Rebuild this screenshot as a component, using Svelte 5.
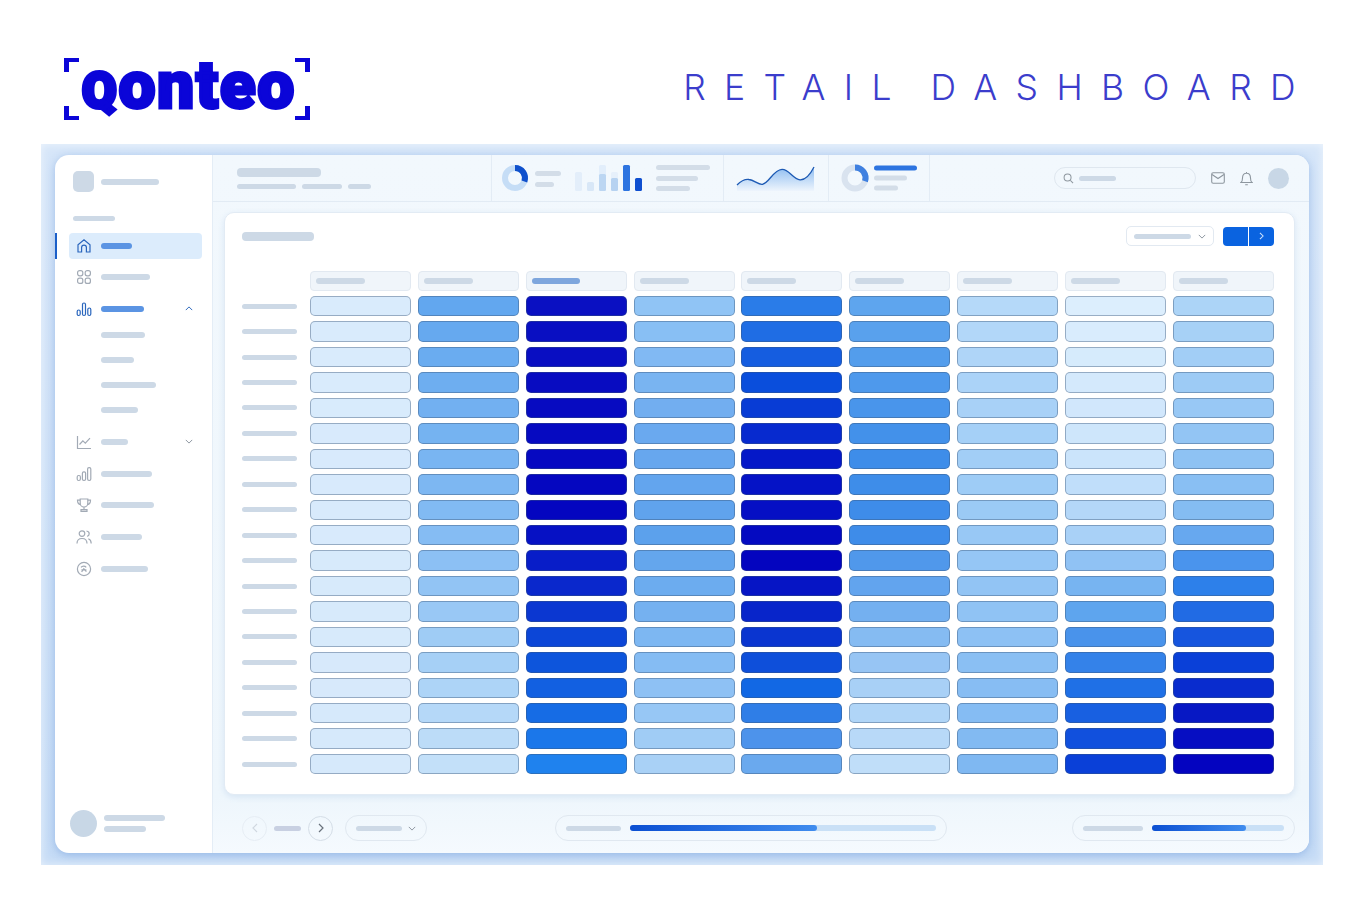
<script>
  const mix = (a, b, t) => a.map((v, i) => Math.round(v + (b[i] - v) * t));
  const hex = (h) => [1, 3, 5].map((i) => parseInt(h.slice(i, i + 2), 16));

  // colour stops per column: [row, colour]
  const columns = [
    [[0, "#d9ebfc"], [18, "#d6e9fb"]],
    [[0, "#62a7ef"], [9, "#85bcf3"], [14, "#a6d0f6"], [18, "#c3e0f9"]],
    [[0, "#0a10c2"], [8, "#0406c0"], [11, "#0a28cc"], [14, "#0d55dc"], [18, "#1f82ee"]],
    [[0, "#90c4f5"], [5, "#6aa9ef"], [9, "#5ca1ec"], [14, "#85bcf3"], [18, "#a9d1f6"]],
    [[0, "#2a7ce8"], [3, "#0a4edc"], [6, "#0518c8"], [10, "#0405bf"], [13, "#0a35d0"], [15, "#1268e4"], [18, "#6aa9ee"]],
    [[0, "#5ea5ee"], [6, "#3e8de9"], [9, "#3e8ce9"], [12, "#74b0f0"], [15, "#a8d0f6"], [18, "#c0def9"]],
    [[0, "#b5d9f9"], [9, "#98c8f5"], [18, "#7fb8f2"]],
    [[0, "#dceefd"], [6, "#cbe4fb"], [9, "#a9d1f7"], [12, "#5ea5ee"], [15, "#1f70e6"], [18, "#0a40d8"]],
    [[0, "#acd4f7"], [8, "#84bcf2"], [11, "#2d80ea"], [14, "#0a40d8"], [16, "#0718c4"], [18, "#0404c0"]]
  ];

  function cellColour(stops, row) {
    for (let i = 0; i < stops.length - 1; i++) {
      const [r0, c0] = stops[i];
      const [r1, c1] = stops[i + 1];
      if (row >= r0 && row <= r1) {
        const [r, g, b] = mix(hex(c0), hex(c1), (row - r0) / (r1 - r0));
        return `rgb(${r},${g},${b})`;
      }
    }
    return stops[0][1];
  }

  const rows = Array.from({ length: 19 }, (_, i) => i);

  const nav = [
    { icon: "home", w: 31, active: true },
    { icon: "apps", w: 49 },
    { icon: "bars", w: 43, open: true, blue: true },
    { sub: true, w: 44 },
    { sub: true, w: 33 },
    { sub: true, w: 55 },
    { sub: true, w: 37 },
    { icon: "line", w: 27, closed: true },
    { icon: "stats", w: 51 },
    { icon: "cup", w: 53 },
    { icon: "users", w: 41 },
    { icon: "badge", w: 47 }
  ];
</script>

<div class="page">
  <header class="brand">
    <div class="logo">
      <i class="corner tl"></i><i class="corner tr"></i><i class="corner bl"></i><i class="corner br"></i>
      <span class="logo-q">Q</span><span>onteo</span>
    </div>
    <h1>RETAIL DASHBOARD</h1>
  </header>

  <div class="panel">
    <div class="app">
      <aside>
        <div class="side-head">
          <div class="square"></div>
          <div class="bar" style:width="58px"></div>
        </div>
        <div class="bar section"></div>
        <nav>
          {#each nav as item}
            <div class="nav-item" class:active={item.active} class:sub={item.sub} class:open={item.open} class:closed={item.closed}>
              {#if item.icon}
                <svg class="ico" class:blue={item.active || item.blue} viewBox="0 0 16 16">
                  {#if item.icon === "home"}
                    <path d="M2 14V6.800L8 1.800l6 5V14h-3.600V9.500a2.400 2.400 0 0 0-4.800 0V14z" />
                  {:else if item.icon === "apps"}
                    <rect x="1.600" y="1.600" width="5.200" height="5.200" rx="2" /><rect x="9.200" y="1.600" width="5.200" height="5.200" rx="2" />
                    <rect x="1.600" y="9.200" width="5.200" height="5.200" rx="2" /><rect x="9.200" y="9.200" width="5.200" height="5.200" rx="2" />
                  {:else if item.icon === "bars"}
                    <rect x="1.200" y="9" width="3" height="5.500" rx="1.500" />
                    <rect x="6.500" y="2" width="3" height="12.500" rx="1.500" />
                    <rect x="11.800" y="7" width="3" height="7.500" rx="1.500" />
                  {:else if item.icon === "line"}
                    <path d="M1.500 2v12.500h13.500M3.500 10.500l3.400-3.600 2.400 2.200 4.700-5" />
                  {:else if item.icon === "stats"}
                    <rect x="1.200" y="9.500" width="3.200" height="5" rx="1.400" />
                    <rect x="6.400" y="5.800" width="3.200" height="8.700" rx="1.400" />
                    <rect x="11.600" y="1.600" width="3.200" height="12.900" rx="1.400" />
                  {:else if item.icon === "cup"}
                    <path d="M4.200 2h7.600v4.200a3.800 3.800 0 0 1-7.600 0zM4.200 3.200H1.500c0 2.600 1 4 3.100 4.500M11.800 3.200h2.700c0 2.600-1 4-3.100 4.500M8 10v2.500M5 14.300h6v-1.600H5z" />
                  {:else if item.icon === "users"}
                    <circle cx="6" cy="4.600" r="2.800" />
                    <path d="M1 14.500c0-3.400 2-5 5-5s5 1.600 5 5M10.500 2c1.800.3 2.700 1.500 2.700 2.800 0 1.200-.8 2.200-2 2.600M12.300 9.800c1.800.6 2.900 2.200 2.900 4.700" />
                  {:else}
                    <circle cx="8" cy="8" r="6.600" />
                    <path d="M5 6.300c1.200-1.600 4-1.700 5.200 0M5.600 11l2.200-3.200 2.600 2.900M5.400 8.800h5" />
                  {/if}
                </svg>
              {/if}
              <div class="bar" class:bluebar={item.active || item.blue} style:width="{item.w}px"></div>
              {#if item.open}
                <svg class="chev up" viewBox="0 0 10 6"><path d="M1 5l4-4 4 4" /></svg>
              {:else if item.closed}
                <svg class="chev" viewBox="0 0 10 6"><path d="M1 1l4 4 4-4" /></svg>
              {/if}
            </div>
          {/each}
        </nav>
        <div class="profile">
          <div class="avatar"></div>
          <div class="profile-lines">
            <div class="bar" style:width="61px"></div>
            <div class="bar" style:width="42px"></div>
          </div>
        </div>
      </aside>

      <div class="content">
        <div class="topbar">
          <div class="titles">
            <div class="bar big" style:width="84px"></div>
            <div class="sublines">
              <div class="bar thin" style:width="59px"></div>
              <div class="bar thin" style:width="40px"></div>
              <div class="bar thin" style:width="23px"></div>
            </div>
          </div>

          <svg class="widget w1" viewBox="492 155 231 46">
            <circle cx="515" cy="178" r="10" class="ring light" />
            <path d="M515 168a10 10 0 0 1 9.400 13.400" class="ring dark" />
            <rect x="535" y="171" width="26" height="5" rx="2.500" fill="#d3dde8" />
            <rect x="535" y="182" width="19" height="5" rx="2.500" fill="#d3dde8" />
            <rect x="575" y="172" width="7" height="19" rx="1.500" fill="#e3eefa" />
            <rect x="587" y="182" width="7" height="9" rx="1.500" fill="#d8e7f7" />
            <rect x="599" y="165" width="7" height="26" rx="1.500" fill="#e2eefb" />
            <rect x="599" y="174" width="7" height="17" rx="1.500" fill="#bcd6f2" />
            <rect x="611" y="172" width="7" height="19" rx="1.500" fill="#e6f0fb" />
            <rect x="611" y="178" width="7" height="13" rx="1.500" fill="#b6d2f1" />
            <rect x="623" y="165" width="7" height="26" rx="1.500" fill="#2d74e0" />
            <rect x="635" y="178" width="7" height="13" rx="1.500" fill="#0f4fd0" />
            <rect x="656" y="165" width="54" height="5" rx="2.500" fill="#d3dde8" />
            <rect x="656" y="176" width="42" height="5" rx="2.500" fill="#d3dde8" />
            <rect x="656" y="186" width="34" height="5" rx="2.500" fill="#d3dde8" />
          </svg>

          <svg class="widget w2" viewBox="724 155 104 46">
            <defs>
              <linearGradient id="spark" x1="0" y1="0" x2="0" y2="1">
                <stop offset="0" stop-color="#8fbdf0" />
                <stop offset="1" stop-color="#eef5fd" />
              </linearGradient>
            </defs>
            <path d="M737 185c4-4 8-6 12-5.500 5 .5 9 5 13 4.800 7-.5 11-14.500 20-15 7-.3 11 10 18 10.500 6 .3 11-6.800 14-12.800V191H737z" fill="url(#spark)" />
            <path d="M737 185c4-4 8-6 12-5.500 5 .5 9 5 13 4.800 7-.5 11-14.500 20-15 7-.3 11 10 18 10.500 6 .3 11-6.800 14-12.800" fill="none" stroke="#1d5ab4" stroke-width="1.300" />
          </svg>

          <svg class="widget w3" viewBox="829 155 100 46">
            <circle cx="855" cy="178" r="10.500" class="ring grey" />
            <path d="M855 167.500a10.500 10.500 0 0 1 10 13.800" class="ring mid" />
            <rect x="874" y="165.500" width="43" height="5" rx="2.500" fill="#2d74e0" />
            <rect x="874" y="175.500" width="33" height="5" rx="2.500" fill="#d3dde8" />
            <rect x="874" y="185.500" width="24" height="5" rx="2.500" fill="#d3dde8" />
          </svg>

          <div class="search">
            <svg viewBox="0 0 12 12"><circle cx="5" cy="5" r="3.800" /><path d="M8 8l3 3" /></svg>
            <div class="bar thin" style:width="37px"></div>
          </div>
          <svg class="top-ico" viewBox="0 0 14 12"><rect x=".7" y=".7" width="12.600" height="10.600" rx="1.500" /><path d="M1 2.500l6 4 6-4" /></svg>
          <svg class="top-ico bell" viewBox="0 0 13 15"><path d="M1 11.500c1.200-1 1.500-2 1.500-4.500 0-3 1.700-4.800 4-4.800s4 1.800 4 4.800c0 2.500.3 3.500 1.500 4.500zM6.500 1v1.200M5.200 13.700h2.600" /></svg>
          <div class="top-avatar"></div>
        </div>

        <div class="card">
          <div class="card-head">
            <div class="bar card-title"></div>
            <div class="select">
              <div class="bar thin" style:width="57px"></div>
              <svg class="chev" viewBox="0 0 10 6"><path d="M1 1l4 4 4-4" /></svg>
            </div>
            <div class="action">
              <span></span>
              <span><svg viewBox="0 0 6 10"><path d="M1 1l4 4-4 4" /></svg></span>
            </div>
          </div>

          <div class="heatmap">
            <div></div>
            {#each columns as _, c}
              <div class="col-head"><div class="bar" class:bluehead={c === 2} style:width="{c === 2 ? 48 : 49}px"></div></div>
            {/each}
            {#each rows as row}
              <div class="row-label"><div class="bar"></div></div>
              {#each columns as stops}
                <div class="cell" style:background-color={cellColour(stops, row)}></div>
              {/each}
            {/each}
          </div>
        </div>

        <div class="foot">
          <div class="round faded"><svg viewBox="0 0 6 10"><path d="M5 1L1 5l4 4" /></svg></div>
          <div class="bar page-bar"></div>
          <div class="round"><svg viewBox="0 0 6 10"><path d="M1 1l4 4-4 4" /></svg></div>
          <div class="pill pager">
            <div class="bar thin" style:width="46px"></div>
            <svg class="chev" viewBox="0 0 10 6"><path d="M1 1l4 4 4-4" /></svg>
          </div>
          <div class="pill progress long">
            <div class="bar thin" style:width="55px"></div>
            <div class="track"><div class="fill" style:width="61%"></div></div>
          </div>
          <div class="pill progress short">
            <div class="bar thin" style:width="60px"></div>
            <div class="track"><div class="fill" style:width="71%"></div></div>
          </div>
        </div>
      </div>
    </div>
  </div>
</div>

<style>
  :global(body) {
    margin: 0;
    background: #fff;
  }

  .page {
    width: 1366px;
    height: 900px;
    overflow: hidden;
    font-family: Inter, "Liberation Sans", sans-serif;
  }

  .brand {
    height: 144px;
    box-sizing: border-box;
    display: flex;
    align-items: center;
    justify-content: space-between;
    padding: 32px 52px 0 64px;
  }

  .logo {
    position: relative;
    width: 246px;
    height: 62px;
    margin-top: 2px;
    box-sizing: border-box;
    padding-left: 18px;
    display: flex;
    align-items: baseline;
    color: #0b05d8;
    font: 900 66px/55px Roboto, sans-serif;
    letter-spacing: 1.400px;
    -webkit-text-stroke: 3px #0b05d8;
  }

  .logo-q {
    font-size: 50px;
    letter-spacing: 2px;
    -webkit-text-stroke: 4px #0b05d8;
  }

  .corner {
    position: absolute;
    width: 15px;
    height: 14px;
    box-sizing: border-box;
    border: 0 solid #0b05d8;
  }
  .tl { left: 0; top: 0; border-width: 4px 0 0 5px; }
  .tr { right: 0; top: 0; border-width: 4px 5px 0 0; }
  .bl { left: 0; bottom: 0; border-width: 0 0 4px 5px; }
  .br { right: 0; bottom: 0; border-width: 0 5px 4px 0; }

  h1 {
    margin: 0;
    color: #3b3dcc;
    font: 300 35.500px/1 Inter, sans-serif;
    letter-spacing: 18.400px;
    word-spacing: -8px;
    white-space: pre;
  }

  .panel {
    width: 1282px;
    height: 721px;
    margin-left: 41px;
    box-sizing: border-box;
    padding: 11px 14px 12px;
    background: linear-gradient(#d6e6f9, #c6dcf6);
    box-shadow: inset 0 0 10px rgba(255, 255, 255, 0.6);
  }

  .app {
    height: 698px;
    display: flex;
    border-radius: 14px;
    overflow: hidden;
    background: #fff;
    box-shadow: 0 2px 8px rgba(90, 140, 210, 0.45);
  }

  aside {
    width: 158px;
    flex: none;
    box-sizing: border-box;
    display: flex;
    flex-direction: column;
    border-right: 1px solid #e4edf6;
    padding: 16px 0 16px 0;
    position: relative;
  }

  .bar {
    height: 6px;
    border-radius: 4px;
    background: #cdd9e6;
    flex: none;
  }

  .thin {
    height: 5px;
  }

  .big {
    height: 9px;
  }

  .side-head {
    display: flex;
    align-items: center;
    gap: 7px;
    padding-left: 18px;
  }

  .square {
    width: 21px;
    height: 21px;
    border-radius: 5px;
    background: #cdd9e6;
  }

  .section {
    width: 42px;
    height: 5px;
    margin: 24px 0 0 18px;
  }

  nav {
    margin: 12px 0 0 14px;
    width: 133px;
    display: flex;
    flex-direction: column;
  }

  .nav-item {
    height: 31.750px;
    display: flex;
    align-items: center;
    gap: 9px;
    padding-left: 7px;
    box-sizing: border-box;
    position: relative;
    flex: none;
  }

  .nav-item.sub {
    height: 25px;
    padding-left: 32px;
  }

  .nav-item.open {
    margin-bottom: -2.500px;
  }

  .nav-item.closed {
    margin-top: 4px;
  }

  .nav-item.active {
    height: 26px;
    margin-bottom: 2px;
    border-radius: 4px;
    background: #dcecfc;
  }

  .nav-item.active::before {
    content: "";
    position: absolute;
    left: -15px;
    top: 0;
    width: 2.500px;
    height: 26px;
    background: #1c5fc8;
  }

  .ico {
    width: 16px;
    height: 16px;
    fill: none;
    stroke: #a2aab5;
    stroke-width: 1.200;
    flex: none;
  }

  .ico.blue {
    stroke: #2a66bd;
  }

  .bluebar {
    background: #5b94e3;
  }

  .chev {
    width: 8px;
    height: 5px;
    fill: none;
    stroke: #8a939e;
    stroke-width: 1.200;
    flex: none;
  }

  .chev.up {
    stroke: #2a66bd;
  }

  .nav-item .chev {
    position: absolute;
    right: 9px;
  }

  .profile {
    margin-top: auto;
    display: flex;
    align-items: center;
    gap: 7px;
    padding-left: 15px;
  }

  .avatar {
    width: 27px;
    height: 27px;
    border-radius: 50%;
    background: #c8d7e6;
  }

  .profile-lines {
    display: flex;
    flex-direction: column;
    gap: 5px;
  }

  .content {
    flex: 1;
    min-width: 0;
    display: flex;
    flex-direction: column;
    background: linear-gradient(#f2f8fd, #eef6fc 92%, #f5fafe);
  }

  .topbar {
    height: 47px;
    flex: none;
    box-sizing: border-box;
    display: flex;
    align-items: center;
    border-bottom: 1px solid #e2ebf4;
  }

  .titles {
    width: 254px;
    flex: none;
    padding-left: 24px;
    display: flex;
    flex-direction: column;
    gap: 7px;
  }

  .sublines {
    display: flex;
    gap: 6px;
  }

  .widget {
    height: 46px;
    flex: none;
    border-left: 1px solid #e3ecf5;
  }

  .w1 { width: 231px; }
  .w2 { width: 104px; }
  .w3 {
    width: 100px;
    border-right: 1px solid #e3ecf5;
  }

  .ring {
    fill: none;
    stroke-width: 6;
  }
  .light { stroke: #c5ddf6; }
  .dark { stroke: #0f50cc; }
  .grey { stroke: #d9e3ef; }
  .mid { stroke: #3f80e0; }

  .search {
    width: 142px;
    height: 22px;
    margin-left: 124px;
    flex: none;
    box-sizing: border-box;
    display: flex;
    align-items: center;
    gap: 5px;
    padding-left: 8px;
    border: 1px solid #dfe7ef;
    border-radius: 11px;
  }

  .search svg {
    width: 11px;
    height: 11px;
    fill: none;
    stroke: #8e979f;
    stroke-width: 1.100;
  }

  .top-ico {
    width: 14px;
    height: 12px;
    margin-left: 15px;
    flex: none;
    fill: none;
    stroke: #8e979f;
    stroke-width: 1.100;
  }

  .bell {
    width: 13px;
    height: 15px;
    margin-left: 15px;
  }

  .top-avatar {
    width: 21px;
    height: 21px;
    margin-left: 15px;
    border-radius: 50%;
    background: #c8d7e6;
    flex: none;
  }

  .card {
    margin: 10px 14px 0 11px;
    height: 583px;
    flex: none;
    box-sizing: border-box;
    padding: 13px 20px 0 17px;
    background: #fff;
    border: 1px solid #e2ebf4;
    border-radius: 10px;
    box-shadow: 0 2px 6px rgba(120, 160, 210, 0.2);
  }

  .card-head {
    height: 20px;
    display: flex;
    align-items: center;
  }

  .card-title {
    width: 72px;
    height: 9px;
    margin-right: auto;
  }

  .select {
    width: 88px;
    height: 20px;
    box-sizing: border-box;
    display: flex;
    align-items: center;
    justify-content: space-between;
    padding: 0 7px;
    border: 1px solid #e2e9f1;
    border-radius: 5px;
  }

  .action {
    width: 51px;
    height: 19px;
    margin-left: 9px;
    display: flex;
    gap: 1px;
    border-radius: 4px;
    overflow: hidden;
  }

  .action span {
    flex: 1;
    display: flex;
    align-items: center;
    justify-content: center;
    background: #0a63e0;
  }

  .action svg {
    width: 5px;
    height: 8px;
    fill: none;
    stroke: #cfe2fb;
    stroke-width: 1.300;
  }

  .heatmap {
    margin-top: 25px;
    display: grid;
    grid-template-columns: 61px repeat(9, 101px);
    grid-template-rows: 20px repeat(19, 20.440px);
    column-gap: 6.875px;
    row-gap: 5px;
  }

  .col-head {
    box-sizing: border-box;
    display: flex;
    align-items: center;
    padding-left: 5px;
    background: #f0f5fa;
    border: 1px solid #e2e9f1;
    border-radius: 4px;
  }

  .bluehead {
    background: #7ea6dd;
  }

  .row-label {
    display: flex;
    align-items: center;
  }

  .row-label .bar {
    width: 55px;
    height: 5px;
  }

  .cell {
    box-sizing: border-box;
    border: 1px solid rgba(60, 85, 120, 0.42);
    border-radius: 5px;
  }

  .foot {
    flex: 1;
    display: flex;
    align-items: center;
    padding: 8px 14px 0 29px;
  }

  .round {
    width: 25px;
    height: 25px;
    flex: none;
    box-sizing: border-box;
    display: flex;
    align-items: center;
    justify-content: center;
    border: 1px solid #d5dee7;
    border-radius: 50%;
  }

  .round svg {
    width: 6px;
    height: 10px;
    fill: none;
    stroke: #69727c;
    stroke-width: 1.200;
  }

  .faded {
    border-color: #e6edf4;
  }

  .faded svg {
    stroke: #d0d8e0;
  }

  .page-bar {
    width: 27px;
    height: 5px;
    margin: 0 7px;
    background: #c8d0e2;
  }

  .pill {
    height: 26px;
    flex: none;
    box-sizing: border-box;
    display: flex;
    align-items: center;
    border: 1px solid #e0e8f0;
    border-radius: 13px;
  }

  .pager {
    width: 82px;
    margin-left: 12px;
    padding: 0 10px;
    justify-content: space-between;
  }

  .progress {
    gap: 9px;
    padding: 0 10px;
  }

  .long {
    width: 392px;
    margin-left: 128px;
  }

  .short {
    width: 223px;
    margin-left: 125px;
  }

  .track {
    flex: 1;
    height: 6px;
    border-radius: 3px;
    background: #c9e0f6;
  }

  .fill {
    height: 100%;
    border-radius: 3px;
    background: linear-gradient(90deg, #0b4fd2, #3f8cee);
  }
</style>
